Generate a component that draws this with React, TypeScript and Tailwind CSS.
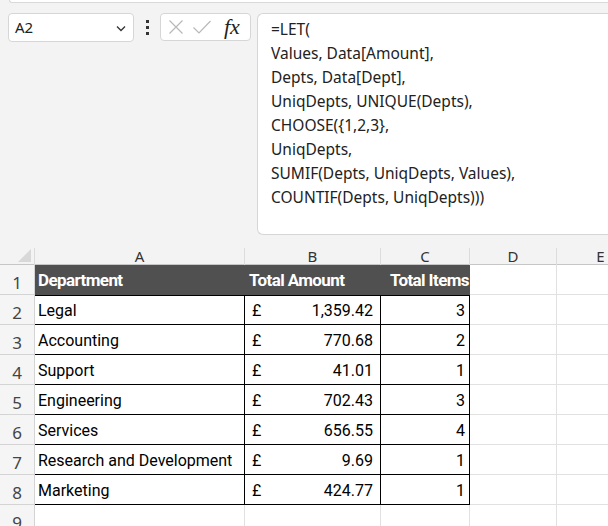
import React from "react";

const rows: [string, string, string][] = [
  ["Legal", "1,359.42", "3"],
  ["Accounting", "770.68", "2"],
  ["Support", "41.01", "1"],
  ["Engineering", "702.43", "3"],
  ["Services", "656.55", "4"],
  ["Research and Development", "9.69", "1"],
  ["Marketing", "424.77", "1"],
];

const formula = [
  "=LET(",
  "Values, Data[Amount],",
  "Depts, Data[Dept],",
  "UniqDepts, UNIQUE(Depts),",
  "CHOOSE({1,2,3},",
  "UniqDepts,",
  "SUMIF(Depts, UniqDepts, Values),",
  "COUNTIF(Depts, UniqDepts)))",
];

const cols = ["A", "B", "C", "D", "E"];
const gridCols = "grid grid-cols-[35px_210px_136px_89px_87px_88px]";

function RowHead({ n }: { n: number }) {
  return (
    <div className="h-[30px] bg-[#f5f5f5] border-r border-b border-[#d4d4d4] flex items-center justify-center pt-[6px] text-[17px] text-[#444] font-['Noto_Sans',sans-serif]">
      {n}
    </div>
  );
}

export default function App() {
  return (
    <div className="w-[608px] h-[526px] overflow-hidden bg-white font-['Roboto',sans-serif]">
      {/* formula bar */}
      <div className="h-[243px] bg-[#f3f3f3] font-['Noto_Sans',sans-serif]">
        <div className="h-[3px] ml-[9px] bg-white border-b border-l border-[#d9d9d9] rounded-bl-md" />
        <div className="flex items-start pt-[10px]">
          <div className="ml-[8px] w-[126px] h-[29px] bg-white border border-[#d6d6d6] rounded-[4px] flex items-center justify-between pl-[6px] pr-[5px]">
            <span className="text-[15px] text-[#222]">A2</span>
            <svg width="14" height="14" viewBox="0 0 14 14">
              <path d="M3 5.5l4 4 4-4" fill="none" stroke="#333" strokeWidth="1.3" />
            </svg>
          </div>
          <div className="w-[26px] h-[29px] flex flex-col items-center justify-center gap-[3px]">
            <span className="w-[3px] h-[3px] bg-[#333]" />
            <span className="w-[3px] h-[3px] bg-[#333]" />
            <span className="w-[3px] h-[3px] bg-[#333]" />
          </div>
          <div className="w-[91px] h-[28px] bg-white border border-[#d6d6d6] rounded-[4px] flex items-center pl-[7px] gap-[8px]">
            <svg width="16" height="16" viewBox="0 0 16 16">
              <path d="M1.5 1.5l13 13M14.5 1.5l-13 13" stroke="#b8b8b8" strokeWidth="1.2" />
            </svg>
            <svg width="20" height="16" viewBox="0 0 20 16">
              <path d="M1.5 8.5l5.5 5.5L18.5 2" fill="none" stroke="#b8b8b8" strokeWidth="1.2" />
            </svg>
            <span className="ml-[4px] text-[22px] leading-none italic text-[#222] font-['Liberation_Serif',serif]">
              fx
            </span>
          </div>
          <div className="ml-[6px] flex-1 h-[222px] bg-white border border-r-0 border-[#d6d6d6] rounded-l-[6px] pl-[13px] pt-[3px]">
            {formula.map((line, i) => (
              <div key={i} className="text-[15.5px] leading-[24px] text-[#222]">
                {line}
              </div>
            ))}
          </div>
        </div>
      </div>

      {/* column headers */}
      <div className={`${gridCols} h-[22px] bg-[#f3f3f3] border-b border-[#c6c6c6]`}>
        <div className="relative border-r border-[#dcdcdc] mt-[5px]">
          <svg className="absolute right-[3px] bottom-[3px]" width="13" height="13" viewBox="0 0 13 13">
            <path d="M13 0V13H0Z" fill="#d8d8d8" />
          </svg>
        </div>
        {cols.map((c) => (
          <div
            key={c}
            className="border-r border-[#dcdcdc] mt-[5px] flex items-end justify-center text-[15px] leading-[17px] text-[#333] font-['Noto_Sans',sans-serif]"
          >
            {c}
          </div>
        ))}
      </div>

      {/* row 1 header */}
      <div className={gridCols}>
        <RowHead n={1} />
        <div className="h-[30px] bg-[#505050] flex items-center pl-[3px] pt-[2px] text-white font-bold text-[17px] tracking-[-0.6px]">
          Department
        </div>
        <div className="h-[30px] bg-[#505050] flex items-center pl-[4px] pt-[2px] text-white font-bold text-[17px] tracking-[-0.6px]">
          Total Amount
        </div>
        <div className="h-[30px] bg-[#505050] flex items-center justify-end pr-[1px] pt-[2px] text-white font-bold text-[17px] tracking-[-0.6px] whitespace-nowrap overflow-hidden">
          Total Items
        </div>
        <div className="h-[30px] border-r border-b border-[#e1e1e1]" />
        <div className="h-[30px] border-r border-b border-[#e1e1e1]" />
      </div>

      {rows.map(([dept, amt, items], i) => (
        <div key={dept} className={gridCols}>
          <RowHead n={i + 2} />
          <div className={`h-[30px] border-r border-b border-black flex items-center pl-[3px] pt-[2px] text-[16px] text-black ${i === 0 ? "border-t" : ""}`}>
            {dept}
          </div>
          <div className={`h-[30px] border-r border-b border-black flex items-center justify-between pl-[7px] pr-[7px] pt-[2px] text-[16px] text-black ${i === 0 ? "border-t" : ""}`}>
            <span>£</span>
            <span>{amt}</span>
          </div>
          <div className={`h-[30px] border-r border-b border-black flex items-center justify-end pr-[4px] pt-[2px] text-[16px] text-black ${i === 0 ? "border-t" : ""}`}>
            {items}
          </div>
          <div className="h-[30px] border-r border-b border-[#e1e1e1]" />
          <div className="h-[30px] border-r border-b border-[#e1e1e1]" />
        </div>
      ))}

      <div className={gridCols}>
        <RowHead n={9} />
        <div className="h-[30px] border-r border-[#e1e1e1]" />
        <div className="h-[30px] border-r border-[#e1e1e1]" />
        <div className="h-[30px] border-r border-[#e1e1e1]" />
        <div className="h-[30px] border-r border-[#e1e1e1]" />
        <div className="h-[30px] border-r border-[#e1e1e1]" />
      </div>
    </div>
  );
}
